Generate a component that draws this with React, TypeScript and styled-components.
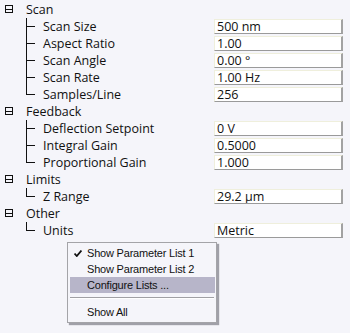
import React from "react";
import styled, { createGlobalStyle } from "styled-components";

const GlobalStyle = createGlobalStyle`
  html, body { margin: 0; padding: 0; background: #f5f5fa; }
  body { font-family: "Open Sans", "Liberation Sans", sans-serif; color: #111; }
`;

const Page = styled.div`
  position: relative;
  width: 350px;
  height: 333px;
  box-sizing: border-box;
  padding: 1px 7px 0 5px;
  font-size: 12.5px;
  overflow: hidden;
`;

const Group = styled.div`
  display: flex;
  flex-direction: column;
`;

const HeaderRow = styled.div`
  display: flex;
  align-items: center;
  gap: 13px;
  height: 17px;
  line-height: 17px;
`;

const ExpandIcon = styled.span`
  position: relative;
  width: 8px;
  height: 8px;
  box-sizing: border-box;
  border: 1px solid #111;
  margin-top: -1px;
  &::after {
    content: "";
    position: absolute;
    left: 0;
    right: 0;
    top: 3px;
    height: 1px;
    background: #111;
  }
`;

const Children = styled.div`
  display: flex;
  flex-direction: column;
  margin-left: 21px;
`;

const ChildRow = styled.div`
  display: grid;
  grid-template-columns: 17px 1fr 129px;
  align-items: center;
  height: 17px;
  line-height: 17px;
`;

const Connector = styled.span<{ $last: boolean }>`
  position: relative;
  align-self: stretch;
  &::before {
    content: "";
    position: absolute;
    left: 0;
    top: 0;
    width: 1px;
    height: ${(p) => (p.$last ? "9px" : "100%")};
    background: #111;
  }
  &::after {
    content: "";
    position: absolute;
    left: 0;
    top: 8px;
    width: 9px;
    height: 1px;
    background: #111;
  }
`;

const Label = styled.span`
  white-space: nowrap;
`;

const ValueBox = styled.span`
  box-sizing: border-box;
  height: 15px;
  padding: 1px 0 0 2px;
  line-height: 12px;
  background: #ffffff;
  border-top: 1px solid #efefdc;
  border-left: 1px solid #efefdc;
  border-right: 2px solid #a2a2a2;
  border-bottom: 1px solid #9a9a9a;
  overflow: hidden;
  white-space: nowrap;
`;

const Menu = styled.div`
  position: absolute;
  left: 67px;
  top: 242px;
  width: 150px;
  box-sizing: border-box;
  padding: 2px 1px 2px 2px;
  background: #f5f5fa;
  border: 1px solid #a4a4a8;
  box-shadow: 2px 2px 1px rgba(90, 90, 100, 0.55);
  font-family: "Liberation Sans", Arial, sans-serif;
  font-size: 11px;
  letter-spacing: -0.2px;
`;

const MenuItem = styled.div<{ $active?: boolean }>`
  position: relative;
  height: 16px;
  line-height: 16px;
  padding-left: 17px;
  background: ${(p) => (p.$active ? "#b7b5c9" : "transparent")};
  white-space: nowrap;
`;

const Check = styled.svg`
  position: absolute;
  left: 4px;
  top: 5px;
`;

const Separator = styled.div`
  height: 1px;
  margin: 4px 1px 5px 0;
  background: #a0a0a4;
  border-bottom: 1px solid #ffffff;
`;

type Item = [string, string];
const groups: { title: string; items: Item[] }[] = [
  {
    title: "Scan",
    items: [
      ["Scan Size", "500 nm"],
      ["Aspect Ratio", "1.00"],
      ["Scan Angle", "0.00 °"],
      ["Scan Rate", "1.00 Hz"],
      ["Samples/Line", "256"],
    ],
  },
  {
    title: "Feedback",
    items: [
      ["Deflection Setpoint", "0 V"],
      ["Integral Gain", "0.5000"],
      ["Proportional Gain", "1.000"],
    ],
  },
  { title: "Limits", items: [["Z Range", "29.2 µm"]] },
  { title: "Other", items: [["Units", "Metric"]] },
];

export default function App() {
  return (
    <>
      <GlobalStyle />
      <Page>
        {groups.map((g) => (
          <Group key={g.title}>
            <HeaderRow>
              <ExpandIcon />
              <Label>{g.title}</Label>
            </HeaderRow>
            <Children>
              {g.items.map(([label, value], i) => (
                <ChildRow key={label}>
                  <Connector $last={i === g.items.length - 1} />
                  <Label>{label}</Label>
                  <ValueBox>{value}</ValueBox>
                </ChildRow>
              ))}
            </Children>
          </Group>
        ))}
        <Menu>
          <MenuItem>
            <Check width="8" height="7" viewBox="0 0 8 7">
              <path d="M0.5 3.5 L2.8 6 L7.5 0.5" stroke="#111" strokeWidth="1.8" fill="none" />
            </Check>
            Show Parameter List 1
          </MenuItem>
          <MenuItem>Show Parameter List 2</MenuItem>
          <MenuItem $active>Configure Lists ...</MenuItem>
          <Separator />
          <MenuItem>Show All</MenuItem>
        </Menu>
      </Page>
    </>
  );
}
